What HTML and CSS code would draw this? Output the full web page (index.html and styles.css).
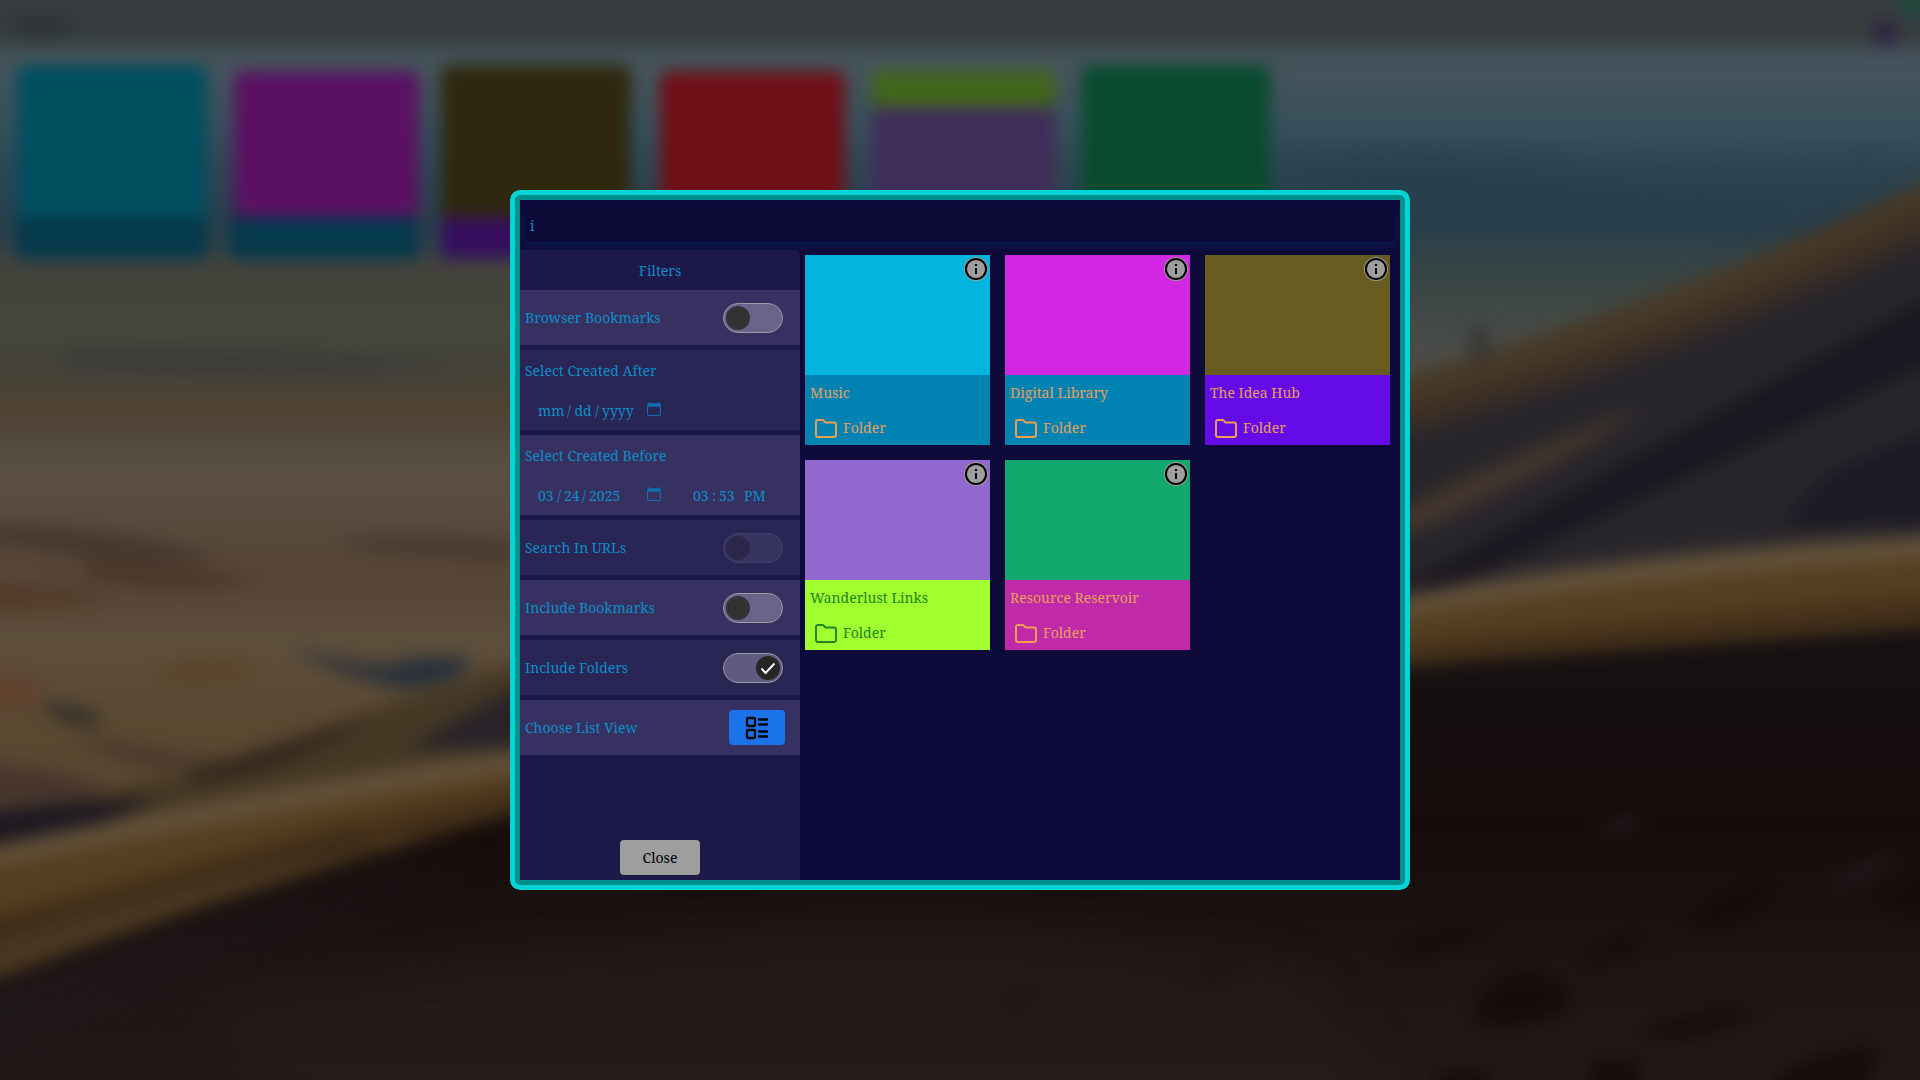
FILE: index.html
```html
<!DOCTYPE html>
<html lang="en">
<head>
<meta charset="utf-8">
<title>Search</title>
<link rel="stylesheet" href="styles.css">
</head>
<body>
<svg class="scene" viewBox="0 0 1920 1080" preserveAspectRatio="none" aria-hidden="true">
  <defs>
    <linearGradient id="sky" x1="0" y1="0" x2="0" y2="1">
      <stop offset="0" stop-color="#46545b"/><stop offset=".17" stop-color="#45545c"/>
      <stop offset=".3" stop-color="#38505b"/><stop offset=".42" stop-color="#2d4551"/>
      <stop offset=".54" stop-color="#293f4b"/><stop offset=".68" stop-color="#3b4644"/>
      <stop offset=".85" stop-color="#4b4d48"/><stop offset="1" stop-color="#524f48"/>
    </linearGradient>
    <linearGradient id="sand" x1="0" y1="255" x2="0" y2="900" gradientUnits="userSpaceOnUse">
      <stop offset="0" stop-color="#43423d"/><stop offset=".12" stop-color="#47463a"/>
      <stop offset=".17" stop-color="#43423b"/><stop offset=".24" stop-color="#4f4331"/>
      <stop offset=".27" stop-color="#50463a"/><stop offset=".33" stop-color="#5b5046"/>
      <stop offset=".4" stop-color="#594b3e"/><stop offset=".5" stop-color="#564434"/>
      <stop offset=".6" stop-color="#5e4e3c"/><stop offset=".72" stop-color="#5a4831"/><stop offset="1" stop-color="#59442e"/>
    </linearGradient>
    <linearGradient id="ground" x1="0" y1="620" x2="0" y2="1080" gradientUnits="userSpaceOnUse">
      <stop offset="0" stop-color="#151113"/><stop offset=".45" stop-color="#160c0b"/>
      <stop offset=".75" stop-color="#1d1413"/><stop offset="1" stop-color="#221818"/>
    </linearGradient>
    <filter id="soft" x="-5%" y="-5%" width="110%" height="110%" color-interpolation-filters="sRGB"><feGaussianBlur stdDeviation="9"/></filter>
    <filter id="haze" x="-20%" y="-20%" width="140%" height="140%" color-interpolation-filters="sRGB"><feGaussianBlur stdDeviation="20"/></filter>
    <filter id="tiles" x="-5%" y="-20%" width="110%" height="140%" color-interpolation-filters="sRGB"><feGaussianBlur stdDeviation="8"/></filter>
  </defs>
  <rect width="1920" height="1080" fill="#3a3c38"/>
  <rect width="1920" height="420" fill="url(#sky)"/>
  <path d="M1280 160Q1440 140 1560 170T1900 160V180Q1700 225 1500 215T1280 190Z" fill="#243d4a" opacity=".6" filter="url(#haze)"/>
  <g filter="url(#soft)">
    <path d="M-40 -40H1960V47H-40Z" fill="#373d3f"/>
    <path d="M-40 255H900V900H-40Z" fill="url(#sand)"/>
    <path d="M60 352Q240 344 460 366Q330 378 70 366Z" fill="#393a39"/>
    <path d="M-20 524Q100 525 220 556Q150 568 80 556T-20 540Z" fill="#46372f"/>
    <path d="M80 560Q160 555 260 582Q180 600 90 580Z" fill="#4b3829"/>
    <path d="M-20 585Q60 585 120 600Q60 612 -20 610Z" fill="#523b2b"/>
    <path d="M340 540Q430 532 520 545V558Q430 556 340 545Z" fill="#43362f"/>
    <path d="M-20 675Q30 670 40 690T-20 710Z" fill="#62422f"/>
    <path d="M160 668Q220 650 260 668Q220 690 160 680Z" fill="#5b4529"/>
    <path d="M290 650Q340 660 385 666Q430 650 475 662Q450 688 400 688Q340 674 290 650Z" fill="#26303a"/>
    <path d="M40 704Q85 704 105 722Q70 732 40 704Z" fill="#2b2b2a"/>
    <path d="M70 735Q130 745 230 762L160 768Q100 755 70 735Z" fill="#48382c"/>
    <path d="M-20 765Q50 765 110 790L60 800H-20Z" fill="#47352d"/>
    <path d="M-40 822Q80 800 200 768Q360 715 540 655V820L-40 900Z" fill="#453724"/>
    <path d="M190 770Q300 745 380 708L330 740Q260 775 190 782Z" fill="#30231b"/>
    <path d="M-40 812Q60 800 160 800L100 824L-40 850Z" fill="#1d1821"/>
    <path d="M410 748Q470 710 535 680V748Z" fill="#272329"/>
    <path d="M1380 382Q1660 310 1960 165V600L1380 650Z" fill="#483826"/>
    <path d="M1380 412Q1660 340 1960 190V600L1380 650Z" fill="#3c2f25"/>
    <path d="M1380 440Q1660 365 1960 222V600L1380 650Z" fill="#28262b"/>
    <path d="M1380 520Q1500 460 1640 408Q1560 470 1380 545Z" fill="#45372c"/>
    <path d="M1380 600Q1640 450 1960 280V350Q1640 500 1380 620Z" fill="#1b1720"/>
    <path d="M1820 480Q1860 455 1960 420V525H1780Z" fill="#1c1a24"/>
    <path d="M1470 328H1488V360H1470Z" fill="#363733"/>
    <path d="M-40 856Q220 792 520 750Q960 640 1410 594Q1660 548 1960 534V1120H-40Z" fill="#63513a"/>
    <path d="M-40 872Q220 820 520 770Q960 655 1410 614Q1660 574 1960 556V1120H-40Z" fill="#553f20"/>
    <path d="M-40 925Q180 870 360 820L380 850Q120 900 -40 960Z" fill="#402d18"/>
    <path d="M350 825Q450 800 540 785V840H350ZM1380 645Q1660 620 1960 592V660H1380Z" fill="#44301a"/>
    <path d="M-40 955Q110 905 260 870L400 845Q180 895 -40 985Z" fill="#4a3722"/>
    <path d="M-40 992Q200 900 520 812Q960 700 1410 665Q1660 648 1960 625V1120H-40Z" fill="url(#ground)"/>
    <path d="M1490 985Q1530 960 1560 985T1520 1025T1490 985ZM1690 920Q1730 880 1780 885Q1750 930 1690 930ZM1640 1035Q1700 1005 1760 1010Q1710 1040 1650 1040ZM1390 950Q1450 925 1500 925Q1450 955 1390 955ZM1580 960Q1620 930 1650 940Q1620 960 1580 965ZM1870 900L1940 870V910Q1890 920 1870 900ZM1770 1080Q1840 1040 1880 1050L1860 1100H1770ZM1590 1060H1640V1100H1590ZM1000 1000Q1020 985 1040 990Q1010 1030 1000 1000ZM1180 985Q1220 955 1240 960Q1210 1000 1180 985ZM1440 1070H1490V1100H1440Z" fill="#140909" opacity=".75"/>
    <path d="M1820 890Q1860 860 1900 855Q1880 880 1820 890ZM1600 830Q1630 810 1640 820Q1620 845 1600 830Z" fill="#221a1c"/>
    <path d="M12 16H70V34H12Z" fill="#2e3233"/>
    <path d="M1874 22H1896V46H1874Z" fill="#302040"/>
    <path d="M1890 -10H1940V18H1910Z" fill="#224a3c"/>
  </g>
  <g filter="url(#haze)">
    <path d="M200 1010Q480 950 760 930T1300 970L1420 1120H300Z" fill="#281d1e" opacity=".5"/>
    <path d="M-40 1015Q200 925 480 855Q300 920 -40 1040Z" fill="#1f191d" opacity=".8"/>
  </g>
  <g filter="url(#tiles)">
    <rect x="17" y="65" width="190" height="193" rx="8" fill="#004f61"/><path d="M17 217H207V258H17Z" fill="#05394c"/>
    <rect x="234" y="71" width="185" height="187" rx="8" fill="#5b1163"/><path d="M230 217H418V258H230Z" fill="#05394c"/>
    <rect x="441" y="65" width="190" height="160" rx="8" fill="#2f280f"/><path d="M441 217H631V258H441Z" fill="#370f5e"/>
    <rect x="660" y="71" width="185" height="187" rx="8" fill="#6f1017"/>
    <path d="M872 71H1055V107H872Z" fill="#41671a"/><path d="M872 107H1055V258H872Z" fill="#412d5a"/>
    <rect x="1082" y="65" width="188" height="193" rx="8" fill="#084b2f"/>
  </g>
</svg>

<svg class="sprite" width="0" height="0" aria-hidden="true">
  <symbol id="i-cal" viewBox="0 0 14 14"><path d="M1.500 1.400V.2h1.600v1h7.800v-1h1.600v1.200Q14 1.800 14 3v9q0 2-2 2H2q-2 0-2-2V3q0-1.200 1.500-1.600ZM1.100 4.800V12q0 .9.9.9h10q.9 0 .9-.9V4.800Z"/></symbol>
  <symbol id="i-info" viewBox="0 0 24 24"><circle cx="12" cy="12" r="12"/><circle cx="12" cy="12" r="10.100" stroke="#000" stroke-width="2"/><path d="M11 7h2v2h-2zM11 11h2v6h-2z" fill="#000"/></symbol>
  <symbol id="i-folder" viewBox="0 0 22 19"><path d="M3 1h4.500q.8 0 1.300.7L10.500 3.500H19q2 0 2 2V16q0 2-2 2H3q-2 0-2-2V3q0-2 2-2Z" fill="none" stroke="currentColor" stroke-width="1.900"/></symbol>
</svg>

<main class="stage">
  <section class="dialog">
    <div class="dialog-inner">
      <div class="search"><div class="search-field">i</div></div>
      <div class="content">
        <aside class="filters">
          <h2 class="filters-title">Filters</h2>
          <div class="rows">
            <div class="row odd"><span>Browser Bookmarks</span><span class="toggle"><i class="knob"></i></span></div>
            <div class="row tall">
              <span>Select Created After</span>
              <div class="date">
                <span class="part mm">mm</span><span class="part sl1">/</span><span class="part dd">dd</span><span class="part sl2">/</span><span class="part yy">yyyy</span>
                <svg class="cal"><use href="#i-cal"/></svg>
              </div>
            </div>
            <div class="row tall odd">
              <span>Select Created Before</span>
              <div class="date">
                <span class="part n1">03</span><span class="part n2">/</span><span class="part n3">24</span><span class="part n4">/</span><span class="part n5">2025</span>
                <svg class="cal"><use href="#i-cal"/></svg>
                <span class="part h1">03</span><span class="part h2">:</span><span class="part h3">53</span><span class="part h4">PM</span>
              </div>
            </div>
            <div class="row"><span>Search In URLs</span><span class="toggle off"><i class="knob"></i></span></div>
            <div class="row odd"><span>Include Bookmarks</span><span class="toggle"><i class="knob"></i></span></div>
            <div class="row"><span>Include Folders</span><span class="toggle on"><i class="knob"><svg viewBox="0 0 24 24"><path d="M5.500 12.500l4 4.500L18.500 7.500" fill="none" stroke="#fff" stroke-width="1.900"/></svg></i></span></div>
            <div class="row odd"><span>Choose List View</span>
              <span class="view-btn"><svg viewBox="0 0 24 24" fill="none" stroke="#000" stroke-width="2.300" stroke-linecap="round"><rect x="2" y="2" width="8" height="8" rx="1.200"/><rect x="2" y="14" width="8" height="8" rx="1.200"/><path d="M14 3.500h8M14 8.500h8M14 15.500h8M14 20.500h8"/></svg></span>
            </div>
          </div>
          <button class="close">Close</button>
        </aside>
        <div class="grid">
          <article class="card music"><div class="thumb"><svg class="info"><use href="#i-info"/></svg></div><div class="meta"><span>Music</span><span class="kind"><svg><use href="#i-folder"/></svg>Folder</span></div></article>
          <article class="card library"><div class="thumb"><svg class="info"><use href="#i-info"/></svg></div><div class="meta"><span>Digital Library</span><span class="kind"><svg><use href="#i-folder"/></svg>Folder</span></div></article>
          <article class="card idea"><div class="thumb"><svg class="info"><use href="#i-info"/></svg></div><div class="meta"><span>The Idea Hub</span><span class="kind"><svg><use href="#i-folder"/></svg>Folder</span></div></article>
          <article class="card links"><div class="thumb"><svg class="info"><use href="#i-info"/></svg></div><div class="meta"><span>Wanderlust Links</span><span class="kind"><svg><use href="#i-folder"/></svg>Folder</span></div></article>
          <article class="card reservoir"><div class="thumb"><svg class="info"><use href="#i-info"/></svg></div><div class="meta"><span>Resource Reservoir</span><span class="kind"><svg><use href="#i-folder"/></svg>Folder</span></div></article>
        </div>
      </div>
    </div>
  </section>
</main>
</body>
</html>
```
FILE: styles.css
```css
* { box-sizing: border-box; }
body {
  margin: 0;
  width: 1920px;
  height: 1080px;
  overflow: hidden;
  background: #2a2322;
  font-family: "Noto Serif", "Droid Serif", "DejaVu Serif Condensed", "DejaVu Serif", serif;
  font-size: 14px;
  line-height: 20px;
  color: #0e8dca;
}
svg { display: block; }
.scene { position: absolute; inset: 0; width: 1920px; height: 1080px; }
.sprite { position: absolute; }
.stage { position: relative; height: 1080px; display: flex; align-items: center; justify-content: center; }
.dialog { width: 900px; height: 700px; border: 5px solid #00d6d6; border-radius: 10px; background: #009090; display: flex; padding: 5px; }
.dialog-inner { flex: 1; display: flex; flex-direction: column; background: #0e0a39; }
.search { height: 50px; padding: 8px 5px; overflow: hidden; }
.search-field { height: 34px; padding: 8px 5px 0; box-shadow: 0 5px 10px rgba(14, 70, 130, .32); background: #0e0a38; }
.content { flex: 1; display: flex; }
.filters { width: 280px; background: #1c1847; border-top-right-radius: 5px; display: flex; flex-direction: column; align-items: center; padding-bottom: 5px; }
.filters-title { margin: 0; height: 40px; line-height: 41px; font-size: inherit; font-weight: 400; }
.rows { width: 100%; display: flex; flex-direction: column; gap: 5px; flex: 1; }
.row { height: 55px; padding: 0 17px 0 5px; background: #292554; display: flex; align-items: center; justify-content: space-between; }
.row.odd { background: #363160; }
.row.tall { height: 80px; padding: 11px 5px 0; flex-direction: column; align-items: flex-start; justify-content: flex-start; }
.date { display: flex; margin-top: 20px; padding-left: 13px; }
.part { flex: none; white-space: nowrap; }
.mm { width: 29px; }
.sl1 { width: 7.5px; }
.dd { width: 20.5px; }
.sl2 { width: 7px; }
.yy { width: 45px; }
.n1 { width: 19px; }
.n2 { width: 7px; }
.n3 { width: 18px; }
.n4 { width: 7px; }
.n5 { width: 58px; }
.h1 { width: 19px; margin-left: 32px; }
.h2 { width: 7px; }
.h3 { width: 25px; }
.h4 { width: 24px; }
.cal { width: 14px; height: 14px; margin-top: 1px; fill: #106fae; }
.toggle { width: 60px; height: 30px; border: 1px solid #9a9aa0; border-radius: 15px; background: #68648a; padding: 2px; display: flex; }
.toggle.on { background: #5f5a82; justify-content: flex-end; }
.toggle.off { opacity: .25; }
.knob { width: 24px; height: 24px; border-radius: 50%; background: #323232; }
.on .knob { background: #262626; }
.knob svg { width: 24px; height: 24px; }
.view-btn { width: 56px; height: 35px; margin-right: -2px; border-radius: 4px; background: #1a73e8; display: flex; align-items: center; justify-content: center; }
.view-btn svg { width: 24px; height: 24px; }
.close { width: 80px; height: 35px; border: 0; border-radius: 4px; background: #9e9e9e; font: inherit; color: #000; padding: 1px 0 0; }
.grid { flex: 1; display: grid; grid-template-columns: repeat(3, 185px); grid-auto-rows: 190px; gap: 15px; padding: 5px; align-content: start; }
.card { display: flex; flex-direction: column; color: #e79f5c; }
.thumb { height: 120px; padding: 2px 2px 0 0; display: flex; justify-content: flex-end; }
.info { width: 24px; height: 24px; fill: #9e9e9e; }
.meta { flex: 1; padding: 8px 5px 0; display: flex; flex-direction: column; }
.kind { display: flex; align-items: center; gap: 6px; padding-left: 5px; margin-top: 15px; }
.kind svg { width: 22px; height: 19px; color: #f0a050; }
.music .thumb { background: #02b4de; }
.music .meta, .library .meta { background: #0083b3; }
.library .thumb { background: #d228e4; }
.idea .thumb { background: #685c20; }
.idea .meta { background: #650be8; }
.links { color: #1f8520; }
.links .thumb { background: #9368ce; }
.links .meta { background: #a1ff30; }
.links .kind svg { color: #1f8520; }
.reservoir .thumb { background: #11a96d; }
.reservoir .meta { background: #c029a7; }
```
